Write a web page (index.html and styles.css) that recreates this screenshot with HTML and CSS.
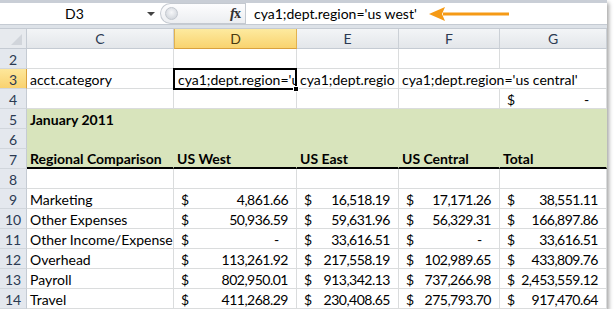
FILE: index.html
```html
<!DOCTYPE html>
<html lang="en">
<head>
  <meta charset="UTF-8">
  <title>Regional Comparison</title>
  <link rel="stylesheet" href="styles.css">
</head>
<body>
  <div class="window">
    <!-- Formula bar -->
    <div class="formula-bar">
      <div class="name-box">
        <span class="name">D3</span>
        <span class="drop"></span>
      </div>
      <div class="fx-pill">
        <span class="knob"></span>
        <span class="fx"><i>f</i>x</span>
      </div>
      <div class="formula">
        <span>cya1;dept.region='us west'</span>
        <svg class="arrow" width="82" height="14" viewBox="0 0 82 14">
          <path d="M14 7 H80" stroke="#f59a16" stroke-width="3"/>
          <path d="M0 7 L16 0 L13 7 L16 14 Z" fill="#f59a16"/>
        </svg>
      </div>
    </div>
    <div class="gap"></div>

    <!-- Sheet -->
    <div class="sheet">
      <div class="corner"><span class="tri"></span></div>
      <div class="col-h">C</div>
      <div class="col-h sel">D</div>
      <div class="col-h">E</div>
      <div class="col-h">F</div>
      <div class="col-h last">G</div>

      <div class="row-h">2</div>
      <div class="cell"></div><div class="cell"></div><div class="cell"></div><div class="cell"></div><div class="cell"></div>

      <div class="row-h sel">3</div>
      <div class="cell">acct.category</div>
      <div class="cell active"><span class="clip">cya1;dept.region='us west'</span><span class="handle"></span></div>
      <div class="cell"><span class="clip">cya1;dept.region='us east'</span></div>
      <div class="cell overflow">cya1;dept.region='us central'</div>
      <div class="cell"></div>

      <div class="row-h">4</div>
      <div class="cell"></div><div class="cell"></div><div class="cell"></div><div class="cell"></div>
      <div class="cell acc"><span>$</span><span>-&nbsp;&nbsp;&nbsp;</span></div>

      <div class="row-h">5</div>
      <div class="cell green bold">January 2011</div>
      <div class="cell green"></div><div class="cell green"></div><div class="cell green"></div><div class="cell green"></div>

      <div class="row-h">6</div>
      <div class="cell green"></div><div class="cell green"></div><div class="cell green"></div><div class="cell green"></div><div class="cell green"></div>

      <div class="row-h">7</div>
      <div class="cell green bold under">Regional Comparison</div>
      <div class="cell green bold under">US West</div>
      <div class="cell green bold under">US East</div>
      <div class="cell green bold under">US Central</div>
      <div class="cell green bold under">Total</div>

      <div class="row-h">8</div>
      <div class="cell"></div><div class="cell"></div><div class="cell"></div><div class="cell"></div><div class="cell"></div>

      <div class="row-h">9</div>
      <div class="cell">Marketing</div>
      <div class="cell acc"><span>$</span><span>4,861.66</span></div>
      <div class="cell acc"><span>$</span><span>16,518.19</span></div>
      <div class="cell acc"><span>$</span><span>17,171.26</span></div>
      <div class="cell acc"><span>$</span><span>38,551.11</span></div>

      <div class="row-h">10</div>
      <div class="cell">Other Expenses</div>
      <div class="cell acc"><span>$</span><span>50,936.59</span></div>
      <div class="cell acc"><span>$</span><span>59,631.96</span></div>
      <div class="cell acc"><span>$</span><span>56,329.31</span></div>
      <div class="cell acc"><span>$</span><span>166,897.86</span></div>

      <div class="row-h">11</div>
      <div class="cell">Other Income/Expense</div>
      <div class="cell acc"><span>$</span><span>-&nbsp;&nbsp;&nbsp;</span></div>
      <div class="cell acc"><span>$</span><span>33,616.51</span></div>
      <div class="cell acc"><span>$</span><span>-&nbsp;&nbsp;&nbsp;</span></div>
      <div class="cell acc"><span>$</span><span>33,616.51</span></div>

      <div class="row-h">12</div>
      <div class="cell">Overhead</div>
      <div class="cell acc"><span>$</span><span>113,261.92</span></div>
      <div class="cell acc"><span>$</span><span>217,558.19</span></div>
      <div class="cell acc"><span>$</span><span>102,989.65</span></div>
      <div class="cell acc"><span>$</span><span>433,809.76</span></div>

      <div class="row-h">13</div>
      <div class="cell">Payroll</div>
      <div class="cell acc"><span>$</span><span>802,950.01</span></div>
      <div class="cell acc"><span>$</span><span>913,342.13</span></div>
      <div class="cell acc"><span>$</span><span>737,266.98</span></div>
      <div class="cell acc"><span>$</span><span>2,453,559.12</span></div>

      <div class="row-h">14</div>
      <div class="cell">Travel</div>
      <div class="cell acc"><span>$</span><span>411,268.29</span></div>
      <div class="cell acc"><span>$</span><span>230,408.65</span></div>
      <div class="cell acc"><span>$</span><span>275,793.70</span></div>
      <div class="cell acc"><span>$</span><span>917,470.64</span></div>
    </div>
  </div>
</body>
</html>
```

FILE: styles.css
```css
* { box-sizing: border-box; margin: 0; padding: 0; }
body { background: #fff; font-family: Lato, "Open Sans", sans-serif; color: #000; }

.window {
  width: 607px; height: 309px; overflow: hidden;
  background: #fff;
  border-top: 3px solid #c9ced6;
  box-shadow: 2px 3px 4px rgba(0,0,0,0.35);
}

/* Formula bar */
.formula-bar { display: flex; height: 22px; background: #fff; border-bottom: 1px solid #c5cbd3; }
.name-box { width: 160px; display: flex; align-items: center; }
.name { flex: 1; text-align: center; font-size: 14px; padding-left: 2px; }
.drop {
  width: 0; height: 0; margin-right: 5px;
  border-left: 4px solid transparent; border-right: 4px solid transparent;
  border-top: 4px solid #444;
}
.fx-pill {
  width: 85px; display: flex; align-items: center; justify-content: space-between;
  background: linear-gradient(#fdfdfe, #eceef1);
  border: 1px solid #c4c9d0; border-right: none;
  border-radius: 11px 0 0 11px; padding: 0 5px 0 4px;
}
.knob {
  width: 13px; height: 13px; border-radius: 50%;
  background: radial-gradient(circle at 50% 40%, #f6f7f9, #c9ced5);
  border: 1px solid #c2c7ce;
}
.fx { font-family: "Liberation Serif", serif; font-size: 14px; font-weight: bold; color: #333; letter-spacing: -1px; }
.fx i { font-size: 15px; }
.formula {
  flex: 1; display: flex; align-items: center; gap: 12px;
  border-left: 1px solid #c4c9d0; padding-left: 8px; font-size: 14px;
}
.arrow { display: block; }
.gap { height: 4px; background: #dde2e8; border-bottom: 1px solid #c5cbd3; }

/* Sheet grid */
.sheet {
  display: grid;
  grid-template-columns: 27px 147px 123px 102px 101px 107px;
  grid-auto-rows: 20px;
  font-size: 14px;
}
.corner {
  background: #e7eaee; border-right: 1px solid #c5cbd3; border-bottom: 1px solid #c5cbd3;
  position: relative;
}
.tri {
  position: absolute; right: 4px; bottom: 3px; width: 0; height: 0;
  border-left: 11px solid transparent; border-bottom: 11px solid #d1d5db;
}
.col-h, .row-h {
  display: flex; align-items: center; justify-content: center;
  font-size: 14px; color: #2b3a52;
}
.col-h {
  background: linear-gradient(#f3f5f7, #e3e6ea);
  border-right: 1px solid #cbd0d6; border-bottom: 1px solid #c5cbd3;
}
.col-h.sel {
  background: linear-gradient(#fdea9f, #f9d36f);
  border-right: 1px solid #e2b24f; border-left: 1px solid #e2b24f; border-bottom: 1px solid #d9a13e;
  color: #4a3a10;
}
.row-h {
  background: #e4e8ee; border-right: 1px solid #c5cbd3; border-bottom: 1px solid #d1d6dc;
  padding-top: 1px;
}
.row-h.sel { background: linear-gradient(#fde79b, #f9d270); border-right-color: #d9a13e; }

.cell {
  border-right: 1px solid #dadcdd; border-bottom: 1px solid #dadcdd;
  padding: 2px 3px 0; white-space: nowrap; overflow: hidden;
  display: flex; align-items: center; line-height: 18px;
}
.clip { overflow: hidden; white-space: nowrap; display: block; }
.cell.overflow { overflow: visible; position: relative; z-index: 1; border-right-color: transparent; }
.cell.active {
  border: 2px solid #000; margin: -1px 0 -1px -1px; padding: 1px 0 0 3px;
  overflow: visible; position: relative; z-index: 2;
}
.active .handle {
  position: absolute; right: -4px; bottom: -4px; width: 6px; height: 6px;
  background: #000; border: 1px solid #fff;
}
.green { background: #d8e4bc; border-color: #d8e4bc; }
.bold { font-weight: bold; }
.under { border-bottom: 2px solid #000; }
.acc { justify-content: space-between; padding: 2px 8px 0 7px; }
.acc span:last-child { letter-spacing: -0.5px; }
```
